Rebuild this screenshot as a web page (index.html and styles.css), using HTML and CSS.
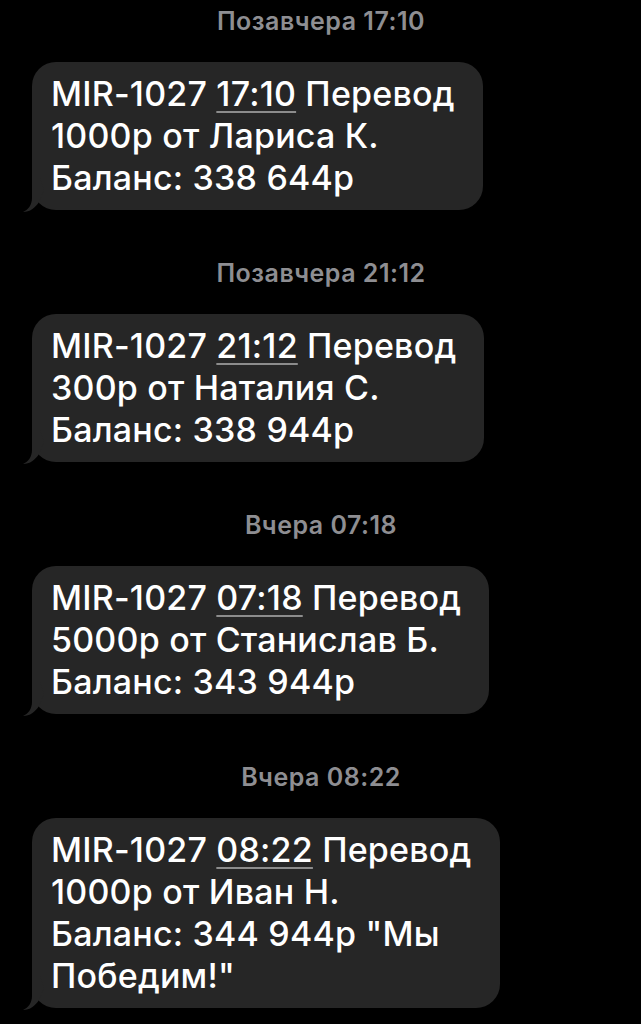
FILE: index.html
```html
<!DOCTYPE html>
<html lang="ru">
<head>
<meta charset="utf-8">
<title>Сообщения</title>
<link rel="stylesheet" href="styles.css">
</head>
<body>
<main class="thread">
  <section class="block">
    <div class="stamp">Позавчера 17:10</div>
    <div class="bubble">
      <p class="text">MIR-1027 <span class="time">17:10</span> Перевод<br>1000р от Лариса К.<br>Баланс: 338 644р</p>
      <svg class="tail" viewBox="0 0 30 36" width="30" height="36"><path d="M12 0 L12 20 C12 27 8 32 3 34 C10 34 15 30 19 24 L24 12 L20 0 Z"/></svg>
    </div>
  </section>
  <section class="block">
    <div class="stamp">Позавчера 21:12</div>
    <div class="bubble">
      <p class="text">MIR-1027 <span class="time">21:12</span> Перевод<br>300р от Наталия С.<br>Баланс: 338 944р</p>
      <svg class="tail" viewBox="0 0 30 36" width="30" height="36"><path d="M12 0 L12 20 C12 27 8 32 3 34 C10 34 15 30 19 24 L24 12 L20 0 Z"/></svg>
    </div>
  </section>
  <section class="block">
    <div class="stamp">Вчера 07:18</div>
    <div class="bubble">
      <p class="text">MIR-1027 <span class="time">07:18</span> Перевод<br>5000р от Станислав Б.<br>Баланс: 343 944р</p>
      <svg class="tail" viewBox="0 0 30 36" width="30" height="36"><path d="M12 0 L12 20 C12 27 8 32 3 34 C10 34 15 30 19 24 L24 12 L20 0 Z"/></svg>
    </div>
  </section>
  <section class="block">
    <div class="stamp">Вчера 08:22</div>
    <div class="bubble">
      <p class="text">MIR-1027 <span class="time">08:22</span> Перевод<br>1000р от Иван Н.<br>Баланс: 344 944р "Мы<br>Победим!"</p>
      <svg class="tail" viewBox="0 0 30 36" width="30" height="36"><path d="M12 0 L12 20 C12 27 8 32 3 34 C10 34 15 30 19 24 L24 12 L20 0 Z"/></svg>
    </div>
  </section>
</main>
</body>
</html>
```
FILE: styles.css
```css
html, body {
  margin: 0;
  padding: 0;
  background: #000;
}
body {
  width: 641px;
  height: 1024px;
  overflow: hidden;
  font-family: Inter, "Noto Sans", "DejaVu Sans", sans-serif;
  color: #fff;
}
.thread {
  display: flex;
  flex-direction: column;
  gap: 42px;
}
.block {
  display: flex;
  flex-direction: column;
  align-items: flex-start;
  gap: 20px;
}
.stamp {
  align-self: stretch;
  text-align: center;
  height: 42px;
  line-height: 42px;
  font-size: 25px;
  font-weight: 600;
  letter-spacing: 0.5px;
  color: #8e8e92;
  padding-left: 1px;
}
.bubble {
  position: relative;
  margin-left: 32px;
  background: #262626;
  border-radius: 24px;
  padding: 11px 28px 11px 19px;
}
.text {
  margin: 0;
  font-size: 34px;
  font-weight: 500;
  line-height: 42px;
  letter-spacing: 0.2px;
  white-space: nowrap;
}
.time {
  text-decoration: underline;
  text-decoration-color: #8c8c8c;
  text-decoration-thickness: 2px;
  text-underline-offset: 5px;
}
.tail {
  position: absolute;
  left: -12px;
  bottom: -4px;
  fill: #262626;
}
```
